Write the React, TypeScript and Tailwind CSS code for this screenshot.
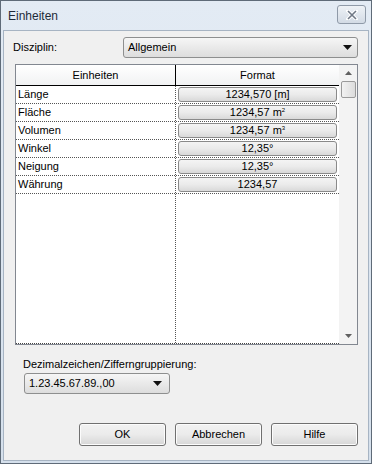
import React from "react";

const ROWS = [
  { name: "Länge", fmt: <>1234,570 [m]</> },
  { name: "Fläche", fmt: <>1234,57 m<sup className="relative -top-[3px] text-[6px]">2</sup></> },
  { name: "Volumen", fmt: <>1234,57 m<sup className="relative -top-[3px] text-[6px]">3</sup></> },
  { name: "Winkel", fmt: <>12,35°</> },
  { name: "Neigung", fmt: <>12,35°</> },
  { name: "Währung", fmt: <>1234,57</> },
];

function Arrow() {
  return (
    <svg width="9" height="5" viewBox="0 0 9 5" className="shrink-0">
      <path d="M0 0h9L4.5 5z" fill="#111" />
    </svg>
  );
}

function WinButton({ children }: { children: React.ReactNode }) {
  return (
    <button className="flex h-[23px] w-[87px] items-center justify-center rounded-[3px] border border-[#707070] bg-gradient-to-b from-[#f2f2f2] via-[#ebebeb] to-[#d6d6d6] text-[11px] text-black shadow-[inset_0_0_0_1px_#fcfcfc]">
      {children}
    </button>
  );
}

export default function App() {
  return (
    <div
      className="flex h-[464px] w-[372px] flex-col border border-[#5f6b78] bg-gradient-to-b from-[#e3ebf4] to-[#d5e0ec] text-black"
      style={{ fontFamily: '"Liberation Sans", Arial, sans-serif' }}
    >
      {/* title bar */}
      <div className="flex h-[29px] shrink-0 items-center justify-between pl-[7px] pr-[5px]">
        <span className="text-[12px] text-[#1e2a38]">Einheiten</span>
        <div className="mt-[-2px] flex h-[19px] w-[29px] items-center justify-center rounded-[3px] border border-[#8f9aa8] bg-gradient-to-b from-[#eef2f6] to-[#d3dbe5]">
          <svg width="12" height="10" viewBox="0 0 12 10">
            <path d="M2 1l8 8M10 1l-8 8" stroke="#fff" strokeWidth="3.4" strokeLinecap="square" />
            <path d="M2 1l8 8M10 1l-8 8" stroke="#6f7885" strokeWidth="1.6" />
          </svg>
        </div>
      </div>

      {/* client area */}
      <div className="mx-[2px] mb-[2px] flex flex-1 flex-col border border-[#a7b4c3] bg-[#f0f0f0] pl-[9px] pr-[10px] pt-[6px] text-[11px]">
        {/* Disziplin */}
        <div className="flex h-[21px] items-center">
          <span className="w-[110px]">Disziplin:</span>
          <div className="flex h-[21px] flex-1 items-center justify-between rounded-[3px] border border-[#8e8f8f] bg-gradient-to-b from-[#f6f6f6] to-[#dddddd] pl-[4px] pr-[5px]">
            <span>Allgemein</span>
            <Arrow />
          </div>
        </div>

        {/* grid */}
        <div className="ml-[2px] mt-[6px] flex h-[281px] w-[343px] border border-[#828790] bg-white">
          <div className="flex flex-1 flex-col">
            <div className="flex h-[21px] shrink-0 border-b border-black bg-gradient-to-b from-[#ffffff] to-[#f1f2f3]">
              <div className="flex w-[160px] items-center justify-center border-r border-black">Einheiten</div>
              <div className="flex flex-1 items-center justify-center">Format</div>
            </div>
            <div className="flex flex-1 flex-col border-b border-dotted border-[#444]">
              {ROWS.map((r) => (
                <div key={r.name} className="flex h-[18px] shrink-0 border-b border-dotted border-[#555]">
                  <div className="flex w-[160px] items-center border-r border-dotted border-[#555] pl-[2px]">{r.name}</div>
                  <div className="flex flex-1 items-center px-[2px]">
                    <div className="flex h-[15px] w-full items-center justify-center rounded-[3px] border border-[#8a8a8a] bg-gradient-to-b from-[#f4f4f4] via-[#ebebeb] to-[#d9d9d9] leading-none">
                      {r.fmt}
                    </div>
                  </div>
                </div>
              ))}
              <div className="flex flex-1">
                <div className="w-[160px] border-r border-dotted border-[#555]" />
              </div>
            </div>
          </div>
          {/* scrollbar */}
          <div className="flex w-[18px] shrink-0 flex-col items-center bg-[#f3f3f3]">
            <div className="flex h-[16px] items-center justify-center">
              <svg width="7" height="4" viewBox="0 0 7 4">
                <path d="M0 4L3.5 0L7 4z" fill="#606060" />
              </svg>
            </div>
            <div className="h-[17px] w-[15px] rounded-[2px] border border-[#9a9a9a] bg-gradient-to-r from-[#f2f2f2] to-[#dcdcdc]" />
            <div className="flex-1" />
            <div className="flex h-[16px] items-center justify-center">
              <svg width="7" height="4" viewBox="0 0 7 4">
                <path d="M0 0L3.5 4L7 0z" fill="#606060" />
              </svg>
            </div>
          </div>
        </div>

        {/* decimal */}
        <div className="ml-[10px] mt-[12px] h-[14px] leading-[14px]">Dezimalzeichen/Zifferngruppierung:</div>
        <div className="ml-[11px] mt-[2px] flex h-[21px] w-[146px] items-center justify-between rounded-[3px] border border-[#8e8f8f] bg-gradient-to-b from-[#f6f6f6] to-[#dddddd] pl-[4px] pr-[7px]">
          <span>1.23.45.67.89.,00</span>
          <Arrow />
        </div>

        {/* buttons */}
        <div className="mt-[29px] flex justify-end gap-[9px]">
          <WinButton>OK</WinButton>
          <WinButton>Abbrechen</WinButton>
          <WinButton>Hilfe</WinButton>
        </div>
      </div>
    </div>
  );
}
